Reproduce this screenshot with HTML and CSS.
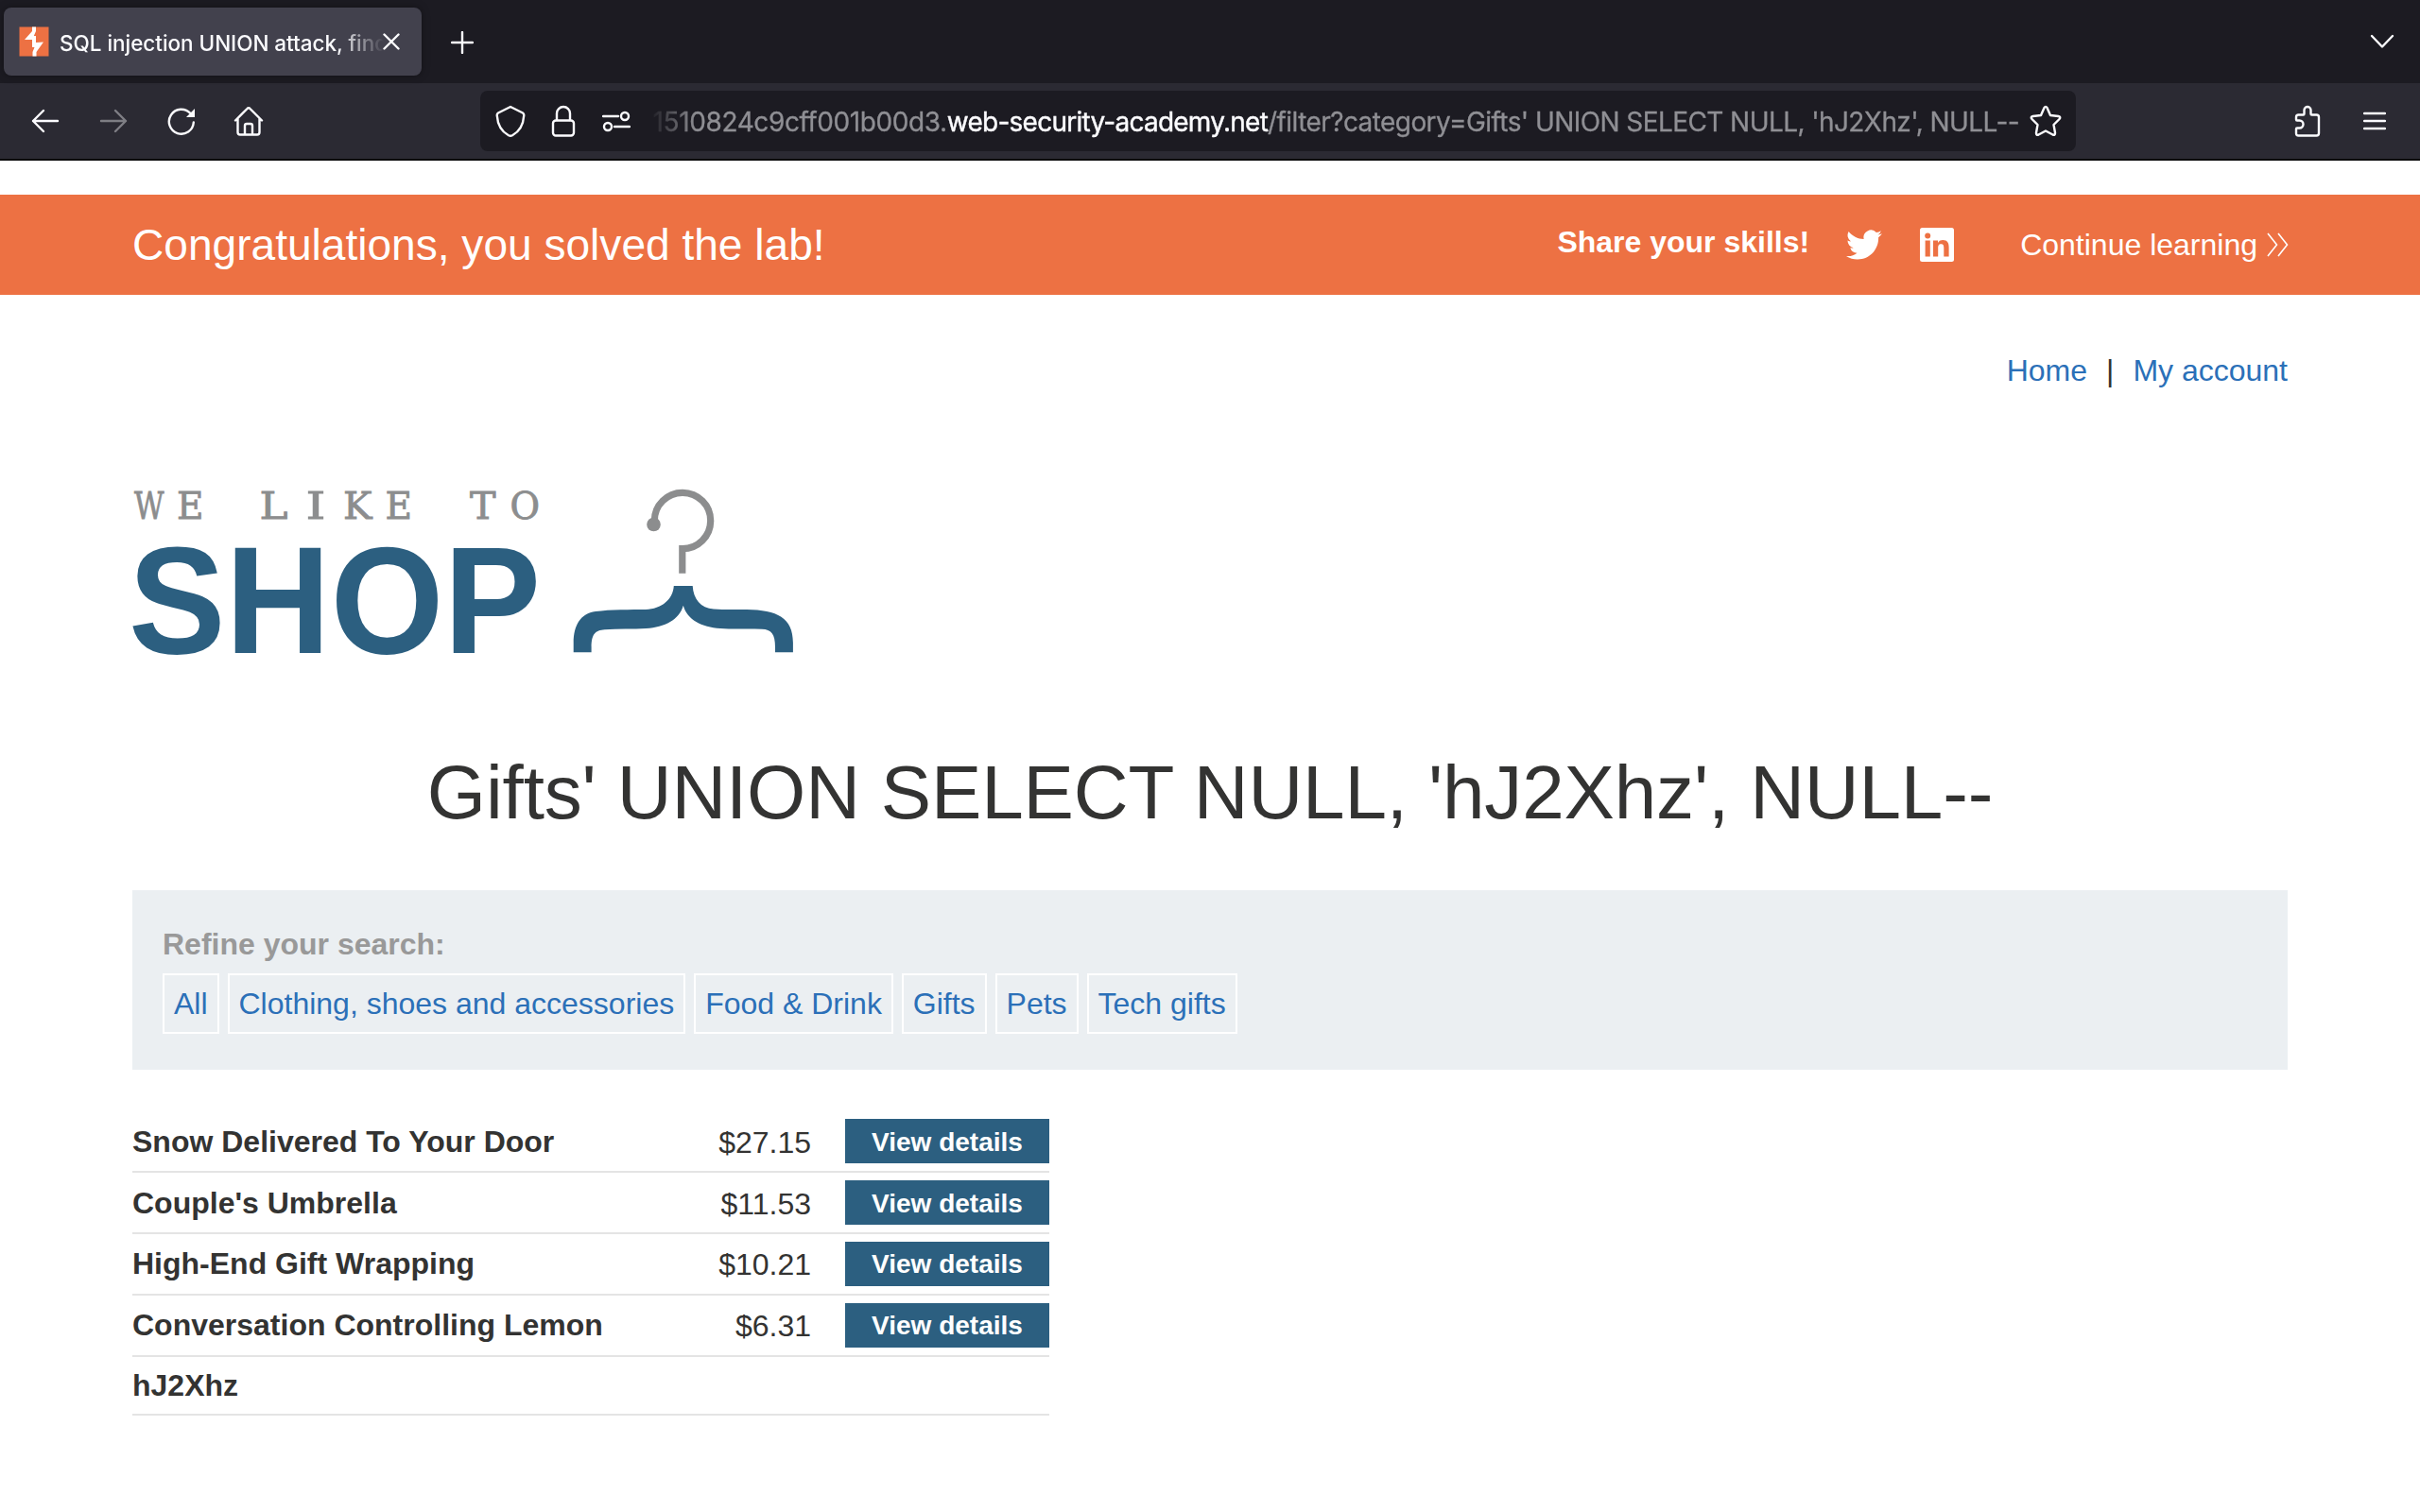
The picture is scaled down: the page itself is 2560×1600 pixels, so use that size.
FILE: index.html
```html
<!DOCTYPE html>
<html lang="en">
<head>
<meta charset="utf-8">
<title>SQL injection UNION attack, finding a column containing text</title>
<link rel="stylesheet" href="styles.css">
</head>
<body>
<header class="browser">
  <div class="tabbar">
    <div class="tab">
      <svg class="favicon" width="32" height="32" viewBox="0 0 32 32"><rect x="0.5" y="0.5" width="31" height="31" fill="#ed7143"/><path d="M14 .5h4V5l-2.200 5H18v7l8-.5L18.500 27v4.500H14.500V27l2-5h-2.500v-8H6L14 5z" fill="#fff"/></svg>
      <span class="tab-title">SQL injection UNION attack, finding</span>
      <svg class="tab-close" width="18" height="18" viewBox="0 0 18 18"><path d="M1.500 1.500l15 15M16.500 1.500l-15 15"/></svg>
    </div>
    <svg class="newtab" width="24" height="24" viewBox="0 0 24 24"><path d="M12 1v22M1 12h22"/></svg>
    <svg class="alltabs" width="26" height="16" viewBox="0 0 26 16"><path d="M2 2l11 11.500L24 2"/></svg>
  </div>
  <div class="toolbar">
    <div class="nav">
      <svg width="32" height="32" viewBox="0 0 32 32"><path d="M29 16H3M14 5L3 16l11 11"/></svg>
      <svg class="disabled" width="32" height="32" viewBox="0 0 32 32"><path d="M3 16h26M18 5l11 11-11 11"/></svg>
      <svg width="32" height="32" viewBox="0 0 32 32"><path d="M28.800 17.500A13 13 0 1 1 25.500 8"/><path d="M30 3v9h-9z" fill="#fbfbfe" stroke="none"/></svg>
      <svg class="home" width="32" height="32" viewBox="0 0 32 32"><path d="M2 15.500L14.500 3a2 2 0 0 1 3 0L30 15.500M4.500 13.500V28a2.500 2.500 0 0 0 2.500 2.500h18a2.500 2.500 0 0 0 2.500-2.500V13.500M12 30V21a2 2 0 0 1 2-2h4a2 2 0 0 1 2 2v9"/></svg>
    </div>
    <div class="urlbar">
      <svg width="32" height="34" viewBox="0 0 32 34"><path d="M16 2L29 8.500Q30.500 9.500 30.200 11.500C29.500 22 24 29 18 32.200Q16 33.200 14 32.200C8 29 2.500 22 1.800 11.500Q1.500 9.500 3 8.500z"/></svg>
      <svg width="26" height="34" viewBox="0 0 26 34"><rect x="2" y="16.500" width="22" height="16" rx="3"/><path d="M6 16V9a7 7 0 0 1 14 0v7"/></svg>
      <svg width="30" height="24" viewBox="0 0 30 24"><path d="M1 7h16M13 18h16"/><circle cx="24" cy="7" r="4"/><circle cx="6" cy="18" r="4"/></svg>
      <div class="url"><span class="sub">1510824c9cff001b00d3.</span><span class="domain">web-security-academy.net</span><span class="path">/filter?category=Gifts' UNION SELECT NULL, 'hJ2Xhz', NULL--</span></div>
      <svg class="star" width="34" height="34" viewBox="0 0 34 34"><path d="M15.400 3.200Q17 .6 18.600 3.200L22 11l8.500 1q3 .6 1 3L25.500 21l1.500 8.500q.2 3-2.500 2L17 27.500l-7.500 4q-2.700 1-2.500-2L8.500 21l-6-6q-2-2.400 1-3L12 11z"/></svg>
    </div>
    <div class="tools">
      <svg width="28" height="34" viewBox="0 0 28 34"><path d="M4.500 10.500H9.500Q10.500 10.500 10.500 9.500V5.500a3.500 3.500 0 0 1 7 0V9.500Q17.500 10.500 18.500 10.500H23.500Q26 10.500 26 13V30Q26 32.500 23.500 32.500H4.500Q2 32.500 2 30V25.500Q2 24.500 3 24.500H5.500a4 4 0 0 0 0-8H3Q2 16.500 2 15.500V13Q2 10.500 4.500 10.500z"/></svg>
      <svg width="24" height="22" viewBox="0 0 24 22"><path d="M1 3h22M1 11h22M1 19h22"/></svg>
    </div>
  </div>
</header>

<section class="banner">
  <h4 class="congrats">Congratulations, you solved the lab!</h4>
  <div class="share">
    <span class="share-label">Share your skills!</span>
    <svg width="38" height="38" viewBox="0 0 24 24"><path fill="#fff" d="M23.950 4.570a10 10 0 0 1-2.820.770 4.960 4.960 0 0 0 2.160-2.720c-.950.550-2 .960-3.130 1.180a4.920 4.920 0 0 0-8.380 4.480C7.690 8.100 4.070 6.130 1.640 3.160a4.920 4.920 0 0 0 1.520 6.570 4.900 4.900 0 0 1-2.230-.610v.060a4.920 4.920 0 0 0 3.950 4.830 5 5 0 0 1-2.210.080 4.940 4.940 0 0 0 4.600 3.420A9.870 9.870 0 0 1 0 19.540a14 14 0 0 0 7.550 2.210c9.050 0 14-7.500 14-13.980 0-.210 0-.420-.020-.630a9.940 9.940 0 0 0 2.420-2.570z"/></svg>
    <svg class="linkedin" width="36" height="36" viewBox="0 0 36 36"><rect width="36" height="36" rx="2.500" fill="#fff"/><circle cx="8.200" cy="8.500" r="3" fill="#ed7143"/><path fill="#ed7143" d="M5.600 13.500h5.200V30.500H5.600zM14 13.500h5v2.400c1-1.700 2.800-2.800 5.200-2.800 5 0 6.400 3.200 6.400 7.600v9.800h-5.300v-8.700c0-2.100-.1-4.500-2.900-4.500s-3.200 2-3.200 4.300v8.900H14z"/></svg>
    <a class="continue">Continue learning</a>
    <svg class="chevrons" width="24" height="26" viewBox="0 0 24 26"><path d="M2 1l9.500 12L2 25M13 1l9.500 12L13 25"/></svg>
  </div>
</section>

<main class="page">
  <nav class="links"><a>Home</a><span>|</span><a>My account</a></nav>
  <svg class="logo" width="704" height="180" viewBox="136 514 704 180">
    <text class="tagline" y="548.500"><tspan x="142" textLength="31.500" lengthAdjust="spacingAndGlyphs">W</tspan><tspan x="187" textLength="28.500" lengthAdjust="spacingAndGlyphs">E</tspan> <tspan x="274.500" textLength="30" lengthAdjust="spacingAndGlyphs">L</tspan><tspan x="323.500" textLength="21" lengthAdjust="spacingAndGlyphs">I</tspan><tspan x="363" textLength="30.500" lengthAdjust="spacingAndGlyphs">K</tspan><tspan x="407.500" textLength="28.500" lengthAdjust="spacingAndGlyphs">E</tspan> <tspan x="497" textLength="27.500" lengthAdjust="spacingAndGlyphs">T</tspan><tspan x="539.500" textLength="31.500" lengthAdjust="spacingAndGlyphs">O</tspan></text>
    <text class="shop" x="136" y="691" textLength="436" lengthAdjust="spacingAndGlyphs">SHOP</text>
    <path d="M692.300 551A29.700 29.700 0 1 1 721.800 580.700V606.700" fill="none" stroke="#8c8d8e" stroke-width="7.200" stroke-miterlimit="10"/>
    <circle cx="691.500" cy="555" r="7.300" fill="#8c8d8e"/>
    <path fill="#2c5f80" d="M712.800 620H732.700C733.500 634 741 643.300 755 644.600C768 645.400 779 645 790 645.100C822 645.500 838.900 654 838.900 680V690.300H820V685C820 671 816 666.200 806 665.800C792 665 776 666 762 665C742 663.500 727 656 722.800 640.700C718.500 656 703.500 663.500 683.600 665C669.600 666 653.600 665 639.600 666.200C629.600 667 625.600 671 625.600 685V690.300H606.700V680C606.700 662 614 649 630 647C645 644.800 668 645 683 644.900C700 644.500 712 634 712.800 620z"/>
  </svg>
  <h1 class="title">Gifts' UNION SELECT NULL, 'hJ2Xhz', NULL--</h1>
  <section class="filters">
    <label class="refine">Refine your search:</label>
    <div class="chips">
      <a class="chip">All</a>
      <a class="chip">Clothing, shoes and accessories</a>
      <a class="chip">Food &amp; Drink</a>
      <a class="chip">Gifts</a>
      <a class="chip">Pets</a>
      <a class="chip">Tech gifts</a>
    </div>
  </section>
  <div class="products">
    <div class="row"><b class="name">Snow Delivered To Your Door</b><span class="price">$27.15</span><a class="button">View details</a></div>
    <div class="row"><b class="name">Couple's Umbrella</b><span class="price">$11.53</span><a class="button">View details</a></div>
    <div class="row tight"><b class="name">High-End Gift Wrapping</b><span class="price">$10.21</span><a class="button">View details</a></div>
    <div class="row tight"><b class="name">Conversation Controlling Lemon</b><span class="price">$6.31</span><a class="button">View details</a></div>
    <div class="row short"><b class="name">hJ2Xhz</b></div>
  </div>
</main>
</body>
</html>
```
FILE: styles.css
```css
* { box-sizing: border-box; }
body { margin: 0; background: #fff; color: #333332; font: 32px/36px "Liberation Sans", Arial, sans-serif; }
svg { display: block; flex: none; }

.browser { font-family: Inter, sans-serif; color: #fbfbfe; }
.browser svg { fill: none; stroke: #fbfbfe; stroke-width: 2.4; stroke-linecap: round; stroke-linejoin: round; }
.browser .favicon { stroke: none; }
.tabbar { height: 88px; padding: 0 27px 8px 4px; display: flex; align-items: center; background: #1c1b22; }
.tab { width: 442px; height: 72px; margin-top: 8px; padding: 0 22px 0 16px; display: flex; align-items: center; border-radius: 8px; background: #42414d; box-shadow: 0 0 8px rgba(0,0,0,.35); }
.tab-title { width: 343px; margin: 4px 0 0 11px; overflow: hidden; white-space: nowrap; font-size: 22.5px; font-weight: 500; line-height: 32px; letter-spacing: -.04px; -webkit-mask-image: linear-gradient(to right, #000 293px, transparent 343px); mask-image: linear-gradient(to right, #000 293px, transparent 343px); }
.tab-close { margin-left: -1px; }
.newtab { margin: 10px 0 0 31px; }
.alltabs { margin: 8px 0 0 auto; }
.toolbar { height: 82px; padding-left: 32px; display: flex; align-items: center; background: #2b2a33; border-bottom: 2px solid #0c0c0d; }
.nav { width: 476px; display: flex; gap: 40px; }
.home { margin-left: -1px; }
.disabled { opacity: .4; }
.urlbar { width: 1688px; height: 64px; padding-left: 16px; display: flex; align-items: center; border-radius: 8px; background: #1c1b22; }
.urlbar svg:nth-child(2) { margin-left: 27px; }
.urlbar svg:nth-child(3) { margin-left: 28px; }
.url { width: 1449px; margin: 2px 0 0 20px; display: flex; justify-content: flex-end; overflow: hidden; white-space: nowrap; font-size: 28px; line-height: 40px; letter-spacing: -.58px; color: #8f8f94; -webkit-mask-image: linear-gradient(to right, transparent 0, #000 50px); mask-image: linear-gradient(to right, transparent 0, #000 50px); }
.domain { color: #fbfbfe; letter-spacing: -.75px; -webkit-text-stroke: .4px #fbfbfe; }
.sub { letter-spacing: -.4px; }
.sub, .path { -webkit-text-stroke: .3px #8f8f94; }
.star { margin-left: 11px; }
.tools { margin-left: 231px; display: flex; align-items: center; gap: 45px; }

.banner { height: 106px; margin-top: 36px; padding: 0 139px 0 140px; display: flex; align-items: center; justify-content: space-between; background: #ed7143; color: #fff; }
.congrats { margin: 0; font-size: 46.08px; font-weight: 400; line-height: 60px; }
.share { display: flex; align-items: center; }
.share-label { margin: -7px 39px 0 0; font-weight: 700; }
.linkedin { margin-left: 40px; }
.continue { margin: 0 9px 0 70px; }
.chevrons { fill: none; stroke: #fff; stroke-width: 1.6; }

.page { padding: 62px 140px 0; }
.links { display: flex; justify-content: flex-end; gap: 20px; }
.links a, .chip { color: #2b70b8; }
.logo { margin: 104px 0 0 -4px; }
.tagline { font: 40px "DejaVu Serif Condensed", "DejaVu Serif", serif; fill: #8c8d8e; stroke: #8c8d8e; stroke-width: .8; }
.shop { font-size: 161px; font-weight: 700; fill: #2c5f80; }
.title { height: 92px; margin: 99px 0 57px; font-size: 80px; font-weight: 400; line-height: 92px; letter-spacing: -.15px; text-align: center; }
.filters { height: 190px; padding: 39px 32px 0; background: #ebeff2; }
.refine { display: block; color: #999; font-weight: 700; }
.chips { margin-top: 13px; display: flex; gap: 8.94px; }
.chip { height: 64px; padding: 12px 10px 0; border: 2px solid #fff; }
.products { width: 970px; margin-top: 44px; }
.row { height: 65px; padding-top: 8px; display: flex; border-bottom: 2px solid #e4e4e4; }
.row.short { height: 62px; }
.name { width: 560px; padding-top: 6px; }
.short .name { padding-top: 4px; }
.price { width: 158px; padding-top: 7px; text-align: right; }
.tight .name { padding-top: 5px; }
.tight .price { padding-top: 6px; }
.button { width: 216px; height: 47px; margin-left: 36px; background: #2c5f80; color: #fff; font-size: 28px; font-weight: 700; line-height: 50px; text-align: center; }
.tight .button { line-height: 48px; }
```
